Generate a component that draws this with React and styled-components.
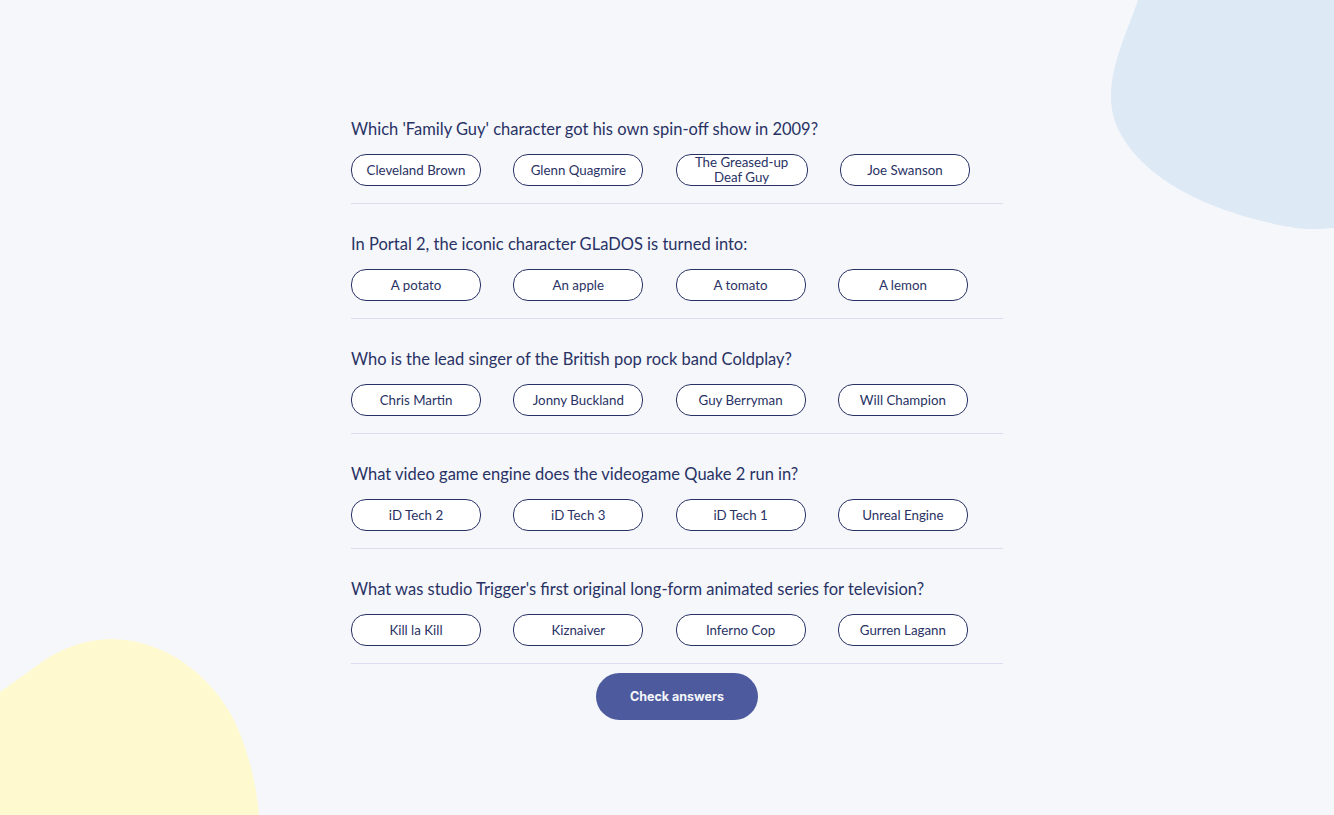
import React from "react";
import styled, { createGlobalStyle } from "styled-components";

const GlobalStyle = createGlobalStyle`
  html, body {
    margin: 0;
    padding: 0;
    background: #f5f7fb;
    font-family: "Lato", "Liberation Sans", sans-serif;
    color: #293264;
  }
`;

const questions = [
  {
    q: "Which 'Family Guy' character got his own spin-off show in 2009?",
    a: ["Cleveland Brown", "Glenn Quagmire", "The Greased-up Deaf Guy", "Joe Swanson"],
  },
  {
    q: "In Portal 2, the iconic character GLaDOS is turned into:",
    a: ["A potato", "An apple", "A tomato", "A lemon"],
  },
  {
    q: "Who is the lead singer of the British pop rock band Coldplay?",
    a: ["Chris Martin", "Jonny Buckland", "Guy Berryman", "Will Champion"],
  },
  {
    q: "What video game engine does the videogame Quake 2 run in?",
    a: ["iD Tech 2", "iD Tech 3", "iD Tech 1", "Unreal Engine"],
  },
  {
    q: "What was studio Trigger's first original long-form animated series for television?",
    a: ["Kill la Kill", "Kiznaiver", "Inferno Cop", "Gurren Lagann"],
  },
];

const Page = styled.main`
  position: relative;
  box-sizing: border-box;
  width: 1334px;
  height: 815px;
  padding-left: 20px;
  overflow: hidden;
`;

const Blob = styled.svg`
  position: absolute;
  top: 0;
  left: 0;
  width: 1334px;
  height: 815px;
  z-index: 0;
`;

const Quiz = styled.div`
  position: relative;
  z-index: 1;
  width: 652px;
  margin: 0 auto;
  padding-top: 118px;
  display: flex;
  flex-direction: column;
`;

const Section = styled.section`
  padding-bottom: 17px;
  border-bottom: 1px solid #dbdef0;
  & + & {
    margin-top: 29px;
  }
`;

const Question = styled.h2`
  margin: 0 0 14px;
  font-size: 16.5px;
  font-weight: 400;
  line-height: 22px;
  color: #293264;
`;

const Answers = styled.div`
  display: flex;
  gap: 32.3px;
`;

const Answer = styled.button`
  box-sizing: border-box;
  width: ${(p) => (p.wide ? "132px" : "130px")};
  height: 32px;
  padding: 0 12px;
  border: 1px solid #293264;
  border-radius: 15px;
  background: #ffffff;
  color: #293264;
  font-family: inherit;
  font-size: 13.3px;
  line-height: 15px;
  text-align: center;
  cursor: pointer;
`;

const CheckButton = styled.button`
  align-self: center;
  margin-top: 9px;
  width: 162px;
  height: 47px;
  border: none;
  border-radius: 24px;
  background: #4d5b9e;
  color: #f5f7fb;
  font-family: "Inter", "Liberation Sans", sans-serif;
  font-size: 12.5px;
  font-weight: 700;
  cursor: pointer;
`;

export default function App() {
  return (
    <Page>
      <GlobalStyle />
      <Blob viewBox="0 0 1334 815" aria-hidden="true">
        <path
          d="M1138,0 C1128,30 1110,65 1111,100 C1113,150 1170,205 1290,227 C1305,230 1320,229 1334,228 L1334,0 Z"
          fill="#dee9f6"
        />
        <path
          d="M0,692 L35,667 C60,648 85,639 112,639 C170,640 212,680 232,716 C250,752 257,790 259,815 L0,815 Z"
          fill="#fff9d0"
        />
      </Blob>
      <Quiz>
        {questions.map((item) => (
          <Section key={item.q}>
            <Question>{item.q}</Question>
            <Answers>
              {item.a.map((ans) => (
                <Answer key={ans} wide={ans.length > 20}>
                  {ans}
                </Answer>
              ))}
            </Answers>
          </Section>
        ))}
        <CheckButton>Check answers</CheckButton>
      </Quiz>
    </Page>
  );
}
